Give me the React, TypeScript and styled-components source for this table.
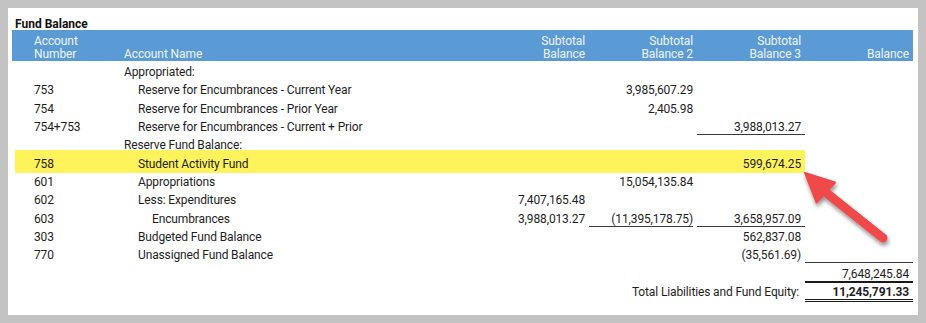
import React from "react";
import styled, { createGlobalStyle, css } from "styled-components";

const GlobalStyle = createGlobalStyle`
  html, body { margin: 0; padding: 0; background: #c3c3c3; }
  body { font-family: Roboto, "Noto Sans", "Liberation Sans", sans-serif; }
  * { box-sizing: border-box; }
`;

const COLS = "112px 1fr repeat(4, 108px)";

const Page = styled.div`
  padding: 8px;
`;

const Panel = styled.section`
  position: relative;
  z-index: 0;
  background: #ffffff;
  height: 307px;
  padding: 0 5px 0 4px;
`;

const Title = styled.h2`
  margin: 0;
  padding: 9px 0 0 3px;
  height: 22px;
  font-size: 12px;
  font-weight: 700;
  line-height: 14px;
  color: #111;
`;

const HeaderRow = styled.div`
  display: grid;
  grid-template-columns: ${COLS};
  align-items: end;
  height: 31px;
  padding: 5px 0 1px;
  background: #5b9bd5;
  color: #eef4fb;
  font-size: 12px;
  line-height: 12.5px;
  letter-spacing: -0.1px;
`;

const HeadCell = styled.div<{ $align?: "left" | "right"; $pad?: number }>`
  text-align: ${(p) => p.$align ?? "left"};
  padding-left: ${(p) => (p.$align === "right" ? 0 : p.$pad ?? 0)}px;
  padding-right: ${(p) => (p.$align === "right" ? 4 : 0)}px;
`;

const Body = styled.div`
  padding-top: 2px;
`;

const Row = styled.div<{ $highlight?: boolean }>`
  position: relative;
  display: grid;
  grid-template-columns: ${COLS};
  align-items: start;
  height: 18.33px;
  font-size: 12px;
  line-height: 14px;
  letter-spacing: -0.13px;
  color: #1e1e1e;
  ${(p) =>
    p.$highlight &&
    css`
      &::before {
        content: "";
        position: absolute;
        top: -4.5px;
        bottom: 0;
        left: 3px;
        right: 108px;
        background: #fff35c;
        z-index: -1;
      }
    `}
`;

const AcctCell = styled.div`
  grid-column: 1;
  padding: 2px 0 0 22px;
  white-space: nowrap;
`;

const NameCell = styled.div<{ $level: number }>`
  grid-column: 2;
  padding: 2px 0 0 ${(p) => p.$level * 14}px;
  white-space: nowrap;
`;

type Line = "single" | "thick" | "double";

const lineStyle = (l?: Line) => {
  if (l === "single") return "1px solid #3a3a3a";
  if (l === "thick") return "2px solid #1a1a1a";
  if (l === "double") return "3px double #1a1a1a";
  return "none";
};

const AmountCell = styled.div<{ $col: number; $line?: Line; $bold?: boolean; $inset?: boolean }>`
  grid-column: ${(p) => p.$col};
  margin-top: 2px;
  padding-right: ${(p) => (p.$inset ? 0 : 4)}px;
  margin-right: ${(p) => (p.$inset ? 4 : 0)}px;
  text-align: right;
  white-space: nowrap;
  font-weight: ${(p) => (p.$bold ? 700 : 400)};
  border-bottom: ${(p) => lineStyle(p.$line)};
`;

const TotalLabel = styled.div`
  grid-column: 2 / 6;
  padding: 2px 6px 0 0;
  text-align: right;
  white-space: nowrap;
`;

const ArrowLayer = styled.svg`
  position: absolute;
  top: 0;
  left: 0;
  width: 910px;
  height: 307px;
  pointer-events: none;
  z-index: 2;
`;

type Amt = { v: string; line?: Line; bold?: boolean; inset?: boolean };
type RowData = {
  num?: string;
  name?: string;
  level?: number;
  highlight?: boolean;
  cols?: { [k: number]: Amt };
};

const rows: RowData[] = [
  { name: "Appropriated:", level: 0 },
  { num: "753", name: "Reserve for Encumbrances - Current Year", level: 1, cols: { 4: { v: "3,985,607.29" } } },
  { num: "754", name: "Reserve for Encumbrances - Prior Year", level: 1, cols: { 4: { v: "2,405.98" } } },
  {
    num: "754+753",
    name: "Reserve for Encumbrances - Current + Prior",
    level: 1,
    cols: { 5: { v: "3,988,013.27", line: "single" } },
  },
  { name: "Reserve Fund Balance:", level: 0 },
  { num: "758", name: "Student Activity Fund", level: 1, highlight: true, cols: { 5: { v: "599,674.25" } } },
  { num: "601", name: "Appropriations", level: 1, cols: { 4: { v: "15,054,135.84" } } },
  { num: "602", name: "Less: Expenditures", level: 1, cols: { 3: { v: "7,407,165.48" } } },
  {
    num: "603",
    name: "Encumbrances",
    level: 2,
    cols: {
      3: { v: "3,988,013.27" },
      4: { v: "(11,395,178.75)", line: "single", inset: true },
      5: { v: "3,658,957.09", line: "single" },
    },
  },
  { num: "303", name: "Budgeted Fund Balance", level: 1, cols: { 5: { v: "562,837.08" } } },
  {
    num: "770",
    name: "Unassigned Fund Balance",
    level: 1,
    cols: { 5: { v: "(35,561.69)" }, 6: { v: "\u00a0", line: "single" } },
  },
  { cols: { 6: { v: "7,648,245.84", line: "thick" } } },
];

export default function App() {
  return (
    <Page>
      <GlobalStyle />
      <Panel>
        <Title>Fund Balance</Title>
        <HeaderRow>
          <HeadCell $pad={22}>
            Account
            <br />
            Number
          </HeadCell>
          <HeadCell>Account Name</HeadCell>
          <HeadCell $align="right">
            Subtotal
            <br />
            Balance
          </HeadCell>
          <HeadCell $align="right">
            Subtotal
            <br />
            Balance 2
          </HeadCell>
          <HeadCell $align="right">
            Subtotal
            <br />
            Balance 3
          </HeadCell>
          <HeadCell $align="right">Balance</HeadCell>
        </HeaderRow>
        <Body>
          {rows.map((r, i) => (
            <Row key={i} $highlight={r.highlight}>
              {r.num && <AcctCell>{r.num}</AcctCell>}
              {r.name && <NameCell $level={r.level ?? 0}>{r.name}</NameCell>}
              {r.cols &&
                Object.entries(r.cols).map(([c, a]) => (
                  <AmountCell key={c} $col={Number(c)} $line={a.line} $bold={a.bold} $inset={a.inset}>
                    {a.v}
                  </AmountCell>
                ))}
            </Row>
          ))}
          <Row>
            <TotalLabel>Total Liabilities and Fund Equity:</TotalLabel>
            <AmountCell $col={6} $line="double" $bold>
              11,245,791.33
            </AmountCell>
          </Row>
        </Body>
        <ArrowLayer viewBox="0 0 910 307">
          <defs>
            <filter id="arrowShadow" x="-20%" y="-20%" width="150%" height="150%">
              <feDropShadow dx="1" dy="3" stdDeviation="2" floodColor="#000" floodOpacity="0.45" />
            </filter>
          </defs>
          <g filter="url(#arrowShadow)" fill="#f0484a" stroke="#f0484a">
            <line x1="816" y1="183" x2="875" y2="230" strokeWidth="9" strokeLinecap="round" />
            <polygon points="797,165 827,174.5 808.5,194.5" strokeWidth="2" strokeLinejoin="round" />
          </g>
        </ArrowLayer>
      </Panel>
    </Page>
  );
}
